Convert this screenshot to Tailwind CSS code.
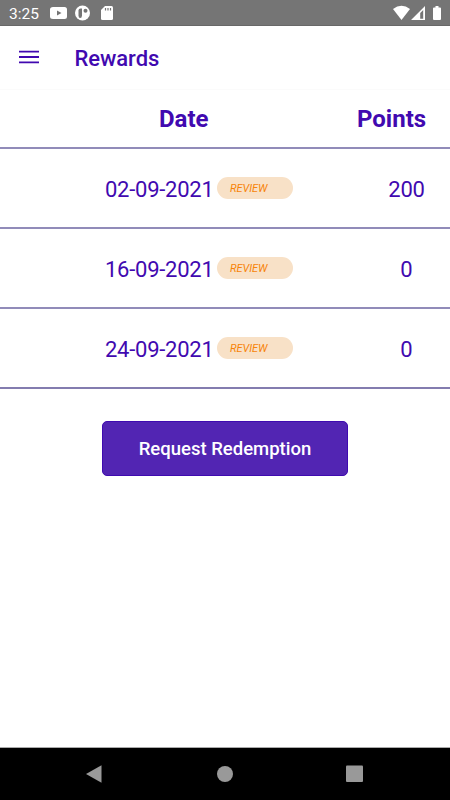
<!DOCTYPE html>
<html lang="en">
<head>
<meta charset="utf-8">
<title>Rewards</title>
<script src="https://cdn.jsdelivr.net/npm/@tailwindcss/browser@4"></script>
</head>
<body class="bg-white font-[Roboto,sans-serif] text-[#4109b0]">
<div class="flex h-[800px] w-[450px] flex-col overflow-hidden">
  <div class="flex h-[26px] shrink-0 items-center border-b border-[#686868] bg-[#757575] text-white">
    <span class="ml-[9px] w-[41px] shrink-0 pt-[4px] text-[15.500px] leading-none whitespace-nowrap">3:25</span>
    <svg class="h-[25px] w-[70px] shrink-0" viewBox="50 0 70 25" fill="#fff">
      <path fill-rule="evenodd" d="M53 7h11.500q2.500 0 2.500 2.500v7q0 2.500-2.500 2.500H53q-3 0-3-2.500v-7Q50 7 53 7Zm4 3.500v5l4.500-2.500Z"/>
      <circle cx="82.500" cy="13" r="7.500"/>
      <path d="M82 8.500h-1.500q-2 0-2 2v5q0 2.500 1.700 2.500t1.800-2.500Z" fill="#757575"/>
      <circle cx="85.500" cy="10.800" r="2" fill="#757575"/>
      <path d="M105 6h6.500q1.500 0 1.500 1.500v11q0 1.500-1.500 1.500h-9q-1.500 0-1.500-1.500V10Z"/>
      <path d="M105.500 8v2.500M108 8v2.500M110.500 8v2.500" stroke="#757575" stroke-width="1.200"/>
    </svg>
    <svg class="ml-auto h-[25px] w-[60px] shrink-0" viewBox="390 0 60 25" fill="#fff">
      <path d="M393 9q8.500-6.500 17 0l-8.500 11Z"/>
      <path fill-rule="evenodd" d="M425 6v14h-14Zm-1.800 4-3 3v5.800h3Z"/>
      <path d="M435.500 6v1.500h-1.500q-1 0-1 1V19q0 1 1 1h6q1 0 1-1V8.500q0-1-1-1h-1.500V6Z"/>
    </svg>
  </div>
  <header class="flex h-[64px] shrink-0 items-center border-b border-[#fbfbfb] pl-[19px]">
    <svg class="-mt-px h-[14px] w-[20px]" viewBox="0 0 20 14" fill="#4109b0"><path d="M0 .8h20v1.800H0zM0 6h20v2H0zM0 11.500h20v1.800H0z"/></svg>
    <h1 class="ml-[35.500px] pt-[2px] text-[22px] leading-none font-medium tracking-[-0.050px]">Rewards</h1>
  </header>
  <main class="flex flex-1 flex-col">
    <div class="flex h-[59px] items-center border-b-2 border-[#918bb9] text-[24px] font-bold">
      <div class="w-[317px] pl-[159px]">Date</div><div class="flex-1 pl-[40px]">Points</div>
    </div>
    <div class="flex h-[80px] items-center border-b-2 border-[#918bb9] text-[22px]">
      <div class="w-[217px] shrink-0 pt-[3px] pl-[105px] tracking-[-0.250px] whitespace-nowrap">02-09-2021</div>
      <div class="-mt-px flex h-[22px] w-[76px] shrink-0 items-center rounded-full bg-[#f8e1c7] pt-[3px] pl-[13px] text-[11px] tracking-[-0.100px] text-[#f78409] italic">REVIEW</div>
      <div class="ml-[64px] w-[99px] shrink-0 pt-[3px] text-center tracking-[-0.200px]">200</div>
    </div>
    <div class="flex h-[80px] items-center border-b-2 border-[#918bb9] text-[22px]">
      <div class="w-[217px] shrink-0 pt-[3px] pl-[105px] tracking-[-0.250px] whitespace-nowrap">16-09-2021</div>
      <div class="-mt-px flex h-[22px] w-[76px] shrink-0 items-center rounded-full bg-[#f8e1c7] pt-[3px] pl-[13px] text-[11px] tracking-[-0.100px] text-[#f78409] italic">REVIEW</div>
      <div class="ml-[64px] w-[99px] shrink-0 pt-[3px] text-center">0</div>
    </div>
    <div class="flex h-[80px] items-center border-b-2 border-[#837caf] text-[22px]">
      <div class="w-[217px] shrink-0 pt-[3px] pl-[105px] tracking-[-0.250px] whitespace-nowrap">24-09-2021</div>
      <div class="-mt-px flex h-[22px] w-[76px] shrink-0 items-center rounded-full bg-[#f8e1c7] pt-[3px] pl-[13px] text-[11px] tracking-[-0.100px] text-[#f78409] italic">REVIEW</div>
      <div class="ml-[64px] w-[99px] shrink-0 pt-[3px] text-center">0</div>
    </div>
    <button class="mx-auto mt-[32px] h-[55px] w-[246px] rounded-[5px] border border-[#3f0bb0] bg-[#5225b3] pt-[2px] text-[18.500px] font-medium text-white">Request Redemption</button>
  </main>
  <nav class="h-[53px] shrink-0 border-t border-[#aaa] bg-black">
    <svg class="h-[52px] w-[450px]" viewBox="0 748 450 52" fill="#999"><path d="M86 774 101.500 765.200v17.600Z"/><circle cx="225" cy="774" r="8"/><rect x="346" y="765.500" width="17" height="16.500" rx="1"/></svg>
  </nav>
</div>
</body>
</html>
